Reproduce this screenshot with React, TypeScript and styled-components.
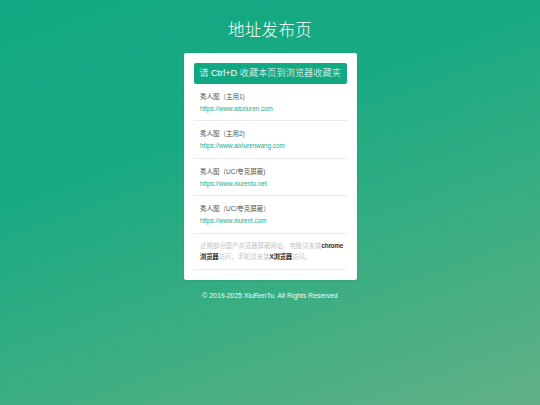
import React from 'react'
import styled, { createGlobalStyle } from 'styled-components'

const GlobalStyle = createGlobalStyle`
  html, body {
    margin: 0;
    padding: 0;
  }
  body {
    font-family: "Liberation Sans", "Noto Sans CJK SC", sans-serif;
  }
`

const Page = styled.div`
  min-height: 100vh;
  box-sizing: border-box;
  padding-top: 18px;
  background: linear-gradient(160deg, #10a882 0%, #1aaa82 35%, #3fae82 70%, #62b085 100%);
  display: flex;
  flex-direction: column;
  align-items: center;
`

const Title = styled.h1`
  margin: 0;
  font-family: "Noto Sans CJK SC", sans-serif;
  font-weight: 300;
  font-size: 16.5px;
  line-height: 22px;
  color: #ffffff;
  letter-spacing: 0.3px;
`

const Card = styled.div`
  margin-top: 12.5px;
  width: 173px;
  box-sizing: border-box;
  padding: 10px;
  background: #ffffff;
  border-radius: 2px;
  box-shadow: 0 1px 3px rgba(0, 0, 0, 0.08);
`

const Banner = styled.div`
  height: 21px;
  line-height: 21px;
  background: #12a882;
  border-radius: 2px;
  color: #ffffff;
  font-size: 9.2px;
  font-weight: 300;
  text-align: center;
  white-space: nowrap;
`

const Item = styled.div`
  padding: 8px 4px 7.5px 6.5px;
  border-bottom: 1px solid #ececec;
`

const Name = styled.div`
  font-size: 6.5px;
  line-height: 9px;
  color: #555555;
`

const Link = styled.a`
  display: block;
  margin-top: 3px;
  font-size: 6.3px;
  line-height: 9px;
  color: #1aab8a;
  text-decoration: none;
`

const Notice = styled.div`
  padding: 6.5px 0 6px 6.5px;
  border-bottom: 1px solid #ececec;
  font-size: 6.4px;
  line-height: 11.3px;
  color: #c4c4c4;
`

const Strong = styled.span`
  color: #333333;
  font-weight: 600;
  letter-spacing: -0.25px;
`

const Footer = styled.div`
  margin-top: 12px;
  font-size: 6.85px;
  line-height: 8px;
  color: #ffffff;
  opacity: 0.95;
`

const sites = [
  { name: '秀人图（主用1)', url: 'https://www.aisxiuren.com' },
  { name: '秀人图（主用2)', url: 'https://www.aixiurenwang.com' },
  { name: '秀人图（UC/夸克屏蔽)', url: 'https://www.xiurentu.net' },
  { name: '秀人图（UC/夸克屏蔽）', url: 'https://www.xiurent.com' },
]

export default function App() {
  return (
    <>
      <GlobalStyle />
      <Page>
        <Title>地址发布页</Title>
        <Card>
          <Banner>请 Ctrl+D 收藏本页到浏览器收藏夹</Banner>
          {sites.map((s) => (
            <Item key={s.url}>
              <Name>{s.name}</Name>
              <Link href={s.url}>{s.url}</Link>
            </Item>
          ))}
          <Notice>
            近期部分国产浏览器屏蔽网址，电脑请安装<Strong>chrome</Strong>
            <Strong>浏览器</Strong>访问，手机请安装<Strong>X浏览器</Strong>访问。
          </Notice>
        </Card>
        <Footer>© 2019-2025 XiuRenTu. All Rights Reserved</Footer>
      </Page>
    </>
  )
}
